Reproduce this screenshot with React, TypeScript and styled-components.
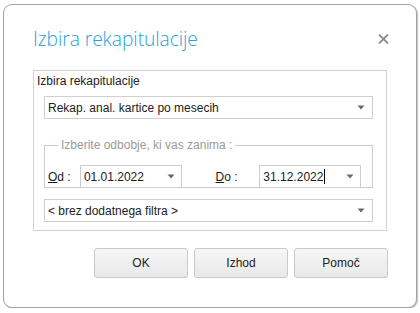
import styled, { createGlobalStyle } from 'styled-components';

const GlobalStyle = createGlobalStyle`
  html, body {
    margin: 0;
    padding: 0;
    background: #ffffff;
  }
  body {
    font-family: 'Liberation Sans', Arial, sans-serif;
    font-size: 12px;
    color: #222222;
  }
`;

function Arrow() {
  return (
    <svg width="8" height="5" viewBox="0 0 8 5">
      <path d="M0.5 0.5 L7.5 0.5 L4 4.5 Z" fill="#6a6a6a" />
    </svg>
  );
}

function CloseIcon() {
  return (
    <svg width="11" height="10" viewBox="0 0 11 10">
      <path
        d="M1 0.5 L10 9.5 M10 0.5 L1 9.5"
        stroke="#8c8c8c"
        strokeWidth="1.8"
        fill="none"
      />
    </svg>
  );
}

function App() {
  return (
    <>
      <GlobalStyle />
      <Page>
        <Dialog>
          <Header>
            <Title>Izbira rekapitulacije</Title>
            <CloseButton>
              <CloseIcon />
            </CloseButton>
          </Header>

          <Panel>
            <PanelLabel>Izbira rekapitulacije</PanelLabel>
            <Combo>
              <span>Rekap. anal. kartice po mesecih</span>
              <Arrow />
            </Combo>

            <Group>
              <Legend>Izberite odbobje, ki vas zanima :</Legend>
              <DateRow>
                <DateLabel $width={32}>
                  <u>O</u>d :
                </DateLabel>
                <DateBox>
                  <span>01.01.2022</span>
                  <Arrow />
                </DateBox>
                <DateLabel $width={44} $gap={34}>
                  <u>D</u>o :
                </DateLabel>
                <DateBox>
                  <span>
                    31.12.2022<Caret />
                  </span>
                  <Arrow />
                </DateBox>
              </DateRow>
            </Group>

            <Combo $top={11}>
              <span>&lt; brez dodatnega filtra &gt;</span>
              <Arrow />
            </Combo>
          </Panel>

          <Buttons>
            <Button>OK</Button>
            <Button>Izhod</Button>
            <Button>Pomoč</Button>
          </Buttons>
        </Dialog>
      </Page>
    </>
  );
}

export default App;

const Page = styled.div`
  padding: 4px 0 0 3px;
`;

const Dialog = styled.div`
  box-sizing: border-box;
  width: 414px;
  height: 304px;
  border: 1px solid #a3a3a3;
  border-radius: 9px;
  box-shadow: 1px 1px 1px rgba(0, 0, 0, 0.25);
  background: #ffffff;
  display: flex;
  flex-direction: column;
  padding: 0 29px 0 29px;
`;

const Header = styled.div`
  display: flex;
  align-items: center;
  justify-content: space-between;
  height: 65px;
`;

const Title = styled.div`
  font-family: 'Open Sans', sans-serif;
  font-weight: 300;
  font-size: 19.2px;
  letter-spacing: -0.05px;
  color: #2a9fdb;
  margin-top: 2px;
`;

const CloseButton = styled.div`
  display: flex;
  margin-top: 2px;
  margin-right: -2px;
`;

const Panel = styled.div`
  box-sizing: border-box;
  height: 161px;
  border: 1px solid #d2d2d2;
  padding: 3px 13px 0 10px;
  display: flex;
  flex-direction: column;
`;

const PanelLabel = styled.div`
  line-height: 15px;
  margin-left: -7px;
  margin-bottom: 7px;
`;

const Combo = styled.div<{ $top?: number }>`
  box-sizing: border-box;
  height: 23px;
  margin-top: ${({ $top }) => $top ?? 0}px;
  border: 1px solid #cfcfcf;
  display: flex;
  align-items: center;
  justify-content: space-between;
  padding: 0 7px 0 3px;
`;

const Group = styled.fieldset`
  margin: 19px 0 0 0;
  padding: 13px 11px 0 3px;
  border: 1px solid #cccccc;
  min-width: 0;
`;

const Legend = styled.legend`
  margin-left: 10px;
  padding: 0 3px;
  line-height: 14px;
  color: #9a9a9a;
`;

const DateRow = styled.div`
  display: flex;
  align-items: center;
  margin-bottom: -1px;
`;

const DateLabel = styled.div<{ $width: number; $gap?: number }>`
  width: ${({ $width }) => $width}px;
  margin-left: ${({ $gap }) => $gap ?? 0}px;
  color: #1a1a1a;
`;

const DateBox = styled.div`
  box-sizing: border-box;
  width: 102px;
  height: 23px;
  border: 1px solid #cfcfcf;
  display: flex;
  align-items: center;
  justify-content: space-between;
  padding: 0 6px 0 3px;
  background: #ffffff;
`;

const Caret = styled.span`
  display: inline-block;
  width: 1px;
  height: 15px;
  background: #000000;
  vertical-align: -3px;
  margin-left: 1px;
`;

const Buttons = styled.div`
  display: flex;
  justify-content: flex-end;
  gap: 6px;
  margin-top: 17px;
  margin-right: -1px;
`;

const Button = styled.button`
  box-sizing: border-box;
  width: 94px;
  height: 30px;
  border: 1px solid #c9c9c9;
  border-radius: 3px;
  background: linear-gradient(#f6f6f6, #e9e9e9);
  font-family: 'Liberation Sans', Arial, sans-serif;
  font-weight: 400;
  font-size: 12px;
  color: #222222;
  padding: 0;
`;
